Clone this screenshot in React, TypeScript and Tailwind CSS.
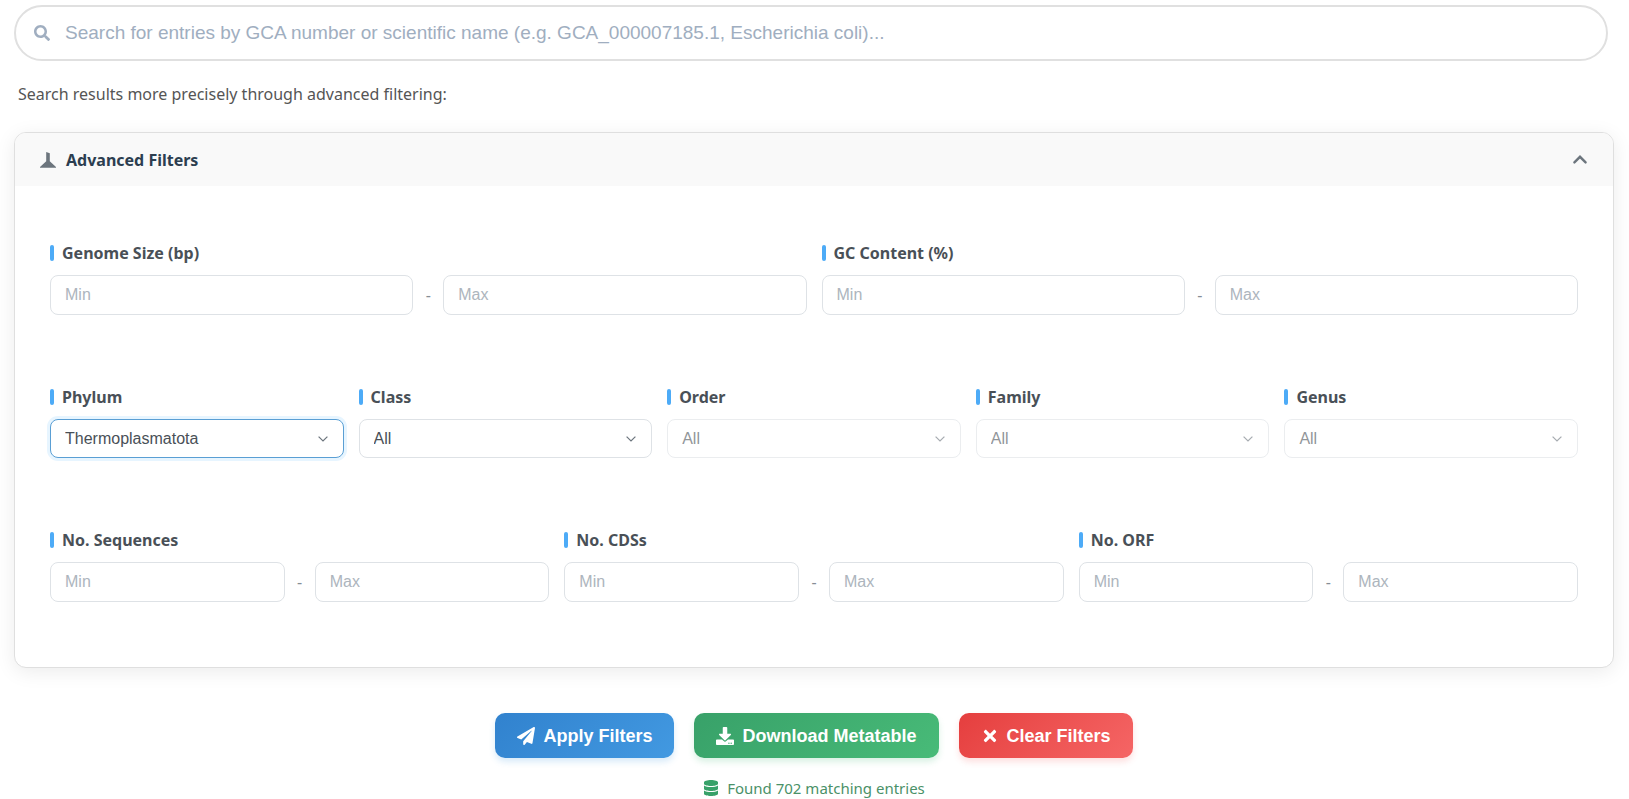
import { FaSearch, FaPaperPlane, FaDownload, FaTimes, FaDatabase } from "react-icons/fa";
import type { ReactNode } from "react";

function FieldLabel({ htmlFor, children }: { htmlFor: string; children: ReactNode }) {
  return (
    <label
      htmlFor={htmlFor}
      className="flex items-center gap-2 text-base leading-6 font-bold text-[#495057]"
    >
      <span className="h-4 w-1 rounded-xs bg-[#4dabf7]" />
      {children}
    </label>
  );
}

const inputClass =
  "h-10 w-full min-w-0 flex-1 rounded-lg border border-[#dee2e6] bg-white px-3.5 font-['Liberation_Sans',Arial,sans-serif] text-base text-[#495057] outline-none placeholder:text-[#adb5bd]";

function RangeField({ id, label }: { id: string; label: string }) {
  return (
    <div className="flex flex-col gap-2.5">
      <FieldLabel htmlFor={`${id}-min`}>{label}</FieldLabel>
      <div className="flex items-center gap-3">
        <input id={`${id}-min`} type="text" placeholder="Min" className={inputClass} />
        <span className="w-1.5 text-center text-base text-[#868e96]">-</span>
        <input
          id={`${id}-max`}
          type="text"
          placeholder="Max"
          aria-label={`${label} maximum`}
          className={inputClass}
        />
      </div>
    </div>
  );
}

type SelectProps = { id: string; label: string; value?: string; active?: boolean; disabled?: boolean };

function SelectField({ id, label, value = "All", active = false, disabled = false }: SelectProps) {
  return (
    <div className="flex flex-col gap-2.5">
      <FieldLabel htmlFor={id}>{label}</FieldLabel>
      <div className={disabled ? "grid items-center opacity-60" : "grid items-center"}>
        <select
          id={id}
          disabled={disabled}
          defaultValue={value}
          className={
            active
              ? "col-start-1 row-start-1 h-[39px] w-full appearance-none rounded-lg border border-[#5a9fd4] bg-white px-3.5 font-['Liberation_Sans',Arial,sans-serif] text-base text-[#495057] shadow-[0_0_0_3px_#e7f5ff] outline-none"
              : "col-start-1 row-start-1 h-[39px] w-full appearance-none rounded-lg border border-[#dee2e6] bg-white px-3.5 font-['Liberation_Sans',Arial,sans-serif] text-base text-[#495057] outline-none"
          }
        >
          <option value={value}>{value}</option>
        </select>
        <svg
          viewBox="0 0 12 12"
          className="pointer-events-none col-start-1 row-start-1 mr-[15px] size-3 justify-self-end"
          fill="none"
          stroke="#6c757d"
          strokeWidth="1.2"
          aria-hidden="true"
        >
          <path d="M1.6 3.6 6 8l4.4-4.4" />
        </svg>
      </div>
    </div>
  );
}

const buttonClass =
  "flex h-[45px] items-center gap-2 rounded-[10px] bg-linear-135 px-[22px] font-['Liberation_Sans',Arial,sans-serif] text-lg font-bold text-white";

export default function App() {
  return (
    <main className="bg-white pt-[5px] pr-[15px] pl-3.5 font-['Noto_Sans','Open_Sans',sans-serif]">
      <div className="mr-1.5 flex h-14 items-center gap-[15px] rounded-full border-2 border-[#e0e0e0] bg-white pr-5 pl-[18px]">
        <FaSearch className="size-4 shrink-0 text-[#a0aec0]" aria-hidden="true" />
        <input
          type="search"
          aria-label="Search entries"
          placeholder="Search for entries by GCA number or scientific name (e.g. GCA_000007185.1, Escherichia coli)..."
          className="min-w-0 flex-1 bg-transparent font-['Liberation_Sans',Arial,sans-serif] text-[19px] text-[#2c3e50] outline-none placeholder:text-[#a0aec0]"
        />
      </div>

      <p className="mt-[19px] pl-1 text-base leading-7 text-[#555555]">
        Search results more precisely through advanced filtering:
      </p>

      <section className="mt-6 overflow-hidden rounded-xl border border-[#dfdfdf] bg-white shadow-[0_4px_20px_rgba(0,0,0,0.08)]">
        <button
          type="button"
          aria-expanded="true"
          className="flex h-[53px] w-full items-center gap-2.5 bg-[#f9f9f9] px-[25px] text-left text-base font-bold text-[#2c3e50]"
        >
          <svg viewBox="0 0 16 16" className="size-4" fill="#6c757d" aria-hidden="true">
            <path d="M6.2 0 9.8 1.2V9.2L16 15v.8H0V15l6.200-5.800z" />
          </svg>
          <span className="flex-1">Advanced Filters</span>
          <svg
            viewBox="0 0 16 16"
            className="size-4"
            fill="none"
            stroke="#6c757d"
            strokeWidth="2.4"
            strokeLinecap="round"
            aria-hidden="true"
          >
            <path d="m2.4 10.400 5.600-5.600 5.600 5.600" />
          </svg>
        </button>

        <div className="flex flex-col gap-[70px] px-[35px] pt-[55px] pb-[65px]">
          <div className="grid grid-cols-2 gap-[15px]">
            <RangeField id="genome-size" label="Genome Size (bp)" />
            <RangeField id="gc-content" label="GC Content (%)" />
          </div>
          <div className="grid grid-cols-5 gap-[15px]">
            <SelectField id="phylum" label="Phylum" value="Thermoplasmatota" active />
            <SelectField id="class" label="Class" />
            <SelectField id="order" label="Order" disabled />
            <SelectField id="family" label="Family" disabled />
            <SelectField id="genus" label="Genus" disabled />
          </div>
          <div className="grid grid-cols-3 gap-[15px]">
            <RangeField id="sequences" label="No. Sequences" />
            <RangeField id="cdss" label="No. CDSs" />
            <RangeField id="orf" label="No. ORF" />
          </div>
        </div>
      </section>

      <div className="mt-[45px] flex justify-center gap-5">
        <button
          type="button"
          className={`${buttonClass} from-[#3182ce] to-[#4299e1] shadow-[0_4px_6px_rgba(66,153,225,0.2)]`}
        >
          <FaPaperPlane className="size-[18px]" aria-hidden="true" />
          Apply Filters
        </button>
        <button
          type="button"
          className={`${buttonClass} from-[#38a169] to-[#48bb78] shadow-[0_4px_6px_rgba(72,187,120,0.2)]`}
        >
          <FaDownload className="size-[18px]" aria-hidden="true" />
          Download Metatable
        </button>
        <button
          type="button"
          className={`${buttonClass} from-[#e53e3e] to-[#f56565] shadow-[0_4px_6px_rgba(245,101,101,0.2)]`}
        >
          <FaTimes className="size-[18px]" aria-hidden="true" />
          Clear Filters
        </button>
      </div>

      <p className="mt-[18px] flex items-center justify-center gap-2 text-[15px] leading-6 text-[#4a9168]">
        <FaDatabase className="size-4 text-[#38a169]" aria-hidden="true" />
        Found 702 matching entries
      </p>
    </main>
  );
}
